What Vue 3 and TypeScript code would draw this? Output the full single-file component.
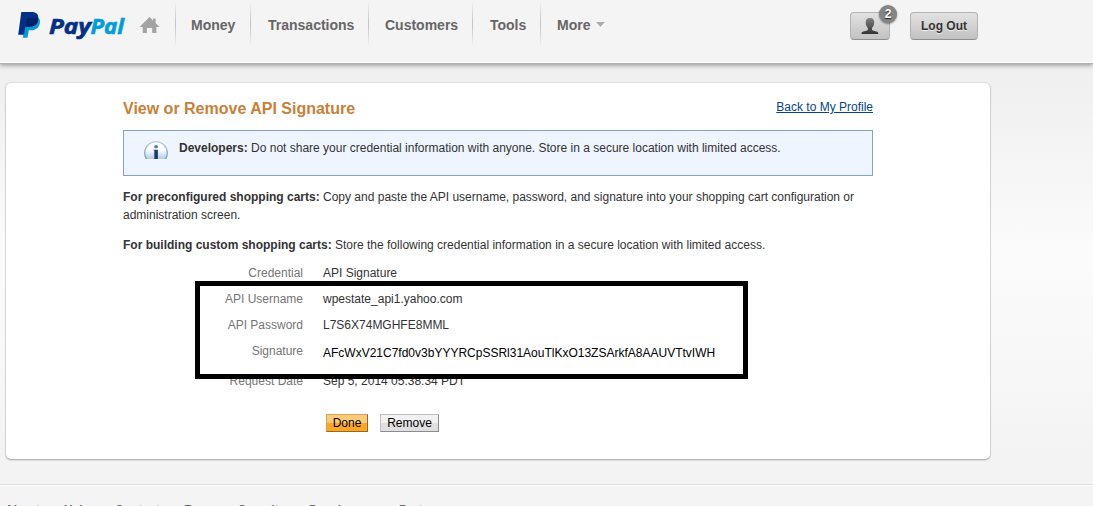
<script setup lang="ts">
interface NavItem { label: string; cls: string }
interface Row { label: string; value: string; cls: string }

const nav: NavItem[] = [
  { label: 'Money', cls: 'money' },
  { label: 'Transactions', cls: 'transactions' },
  { label: 'Customers', cls: 'customers' },
  { label: 'Tools', cls: 'tools' },
  { label: 'More', cls: 'more' },
]

const rows: Row[] = [
  { label: 'Credential', value: 'API Signature', cls: 'credential' },
  { label: 'API Username', value: 'wpestate_api1.yahoo.com', cls: 'username' },
  { label: 'API Password', value: 'L7S6X74MGHFE8MML', cls: 'password' },
  { label: 'Signature', value: 'AFcWxV21C7fd0v3bYYYRCpSSRl31AouTlKxO13ZSArkfA8AAUVTtvIWH', cls: 'signature' },
  { label: 'Request Date', value: 'Sep 5, 2014 05:38:34 PDT', cls: 'date' },
]

const footer: NavItem[] = [
  { label: 'About', cls: 'w59' },
  { label: 'Help', cls: 'w51' },
  { label: 'Contact', cls: 'w69' },
  { label: 'Fees', cls: 'w54' },
  { label: 'Security', cls: 'w71' },
  { label: 'Developers', cls: 'w90' },
  { label: 'Partners', cls: 'w60' },
]
</script>

<template>
  <div class="page">
    <header class="header">
      <div class="brand">
        <svg class="mark" width="24" height="28" viewBox="0 0 24 28">
          <path fill="#009cde" d="M7 7h13.4c1.5 1.3 1.9 3.1 1.4 5.3-1 4.900-4.200 7-8.700 7h-2.300l-1.300 7.500H5z" />
          <path fill="#003087" d="M3.300 1h10.200c4.700 0 7.400 2.300 6.700 7-.8 5.500-4.500 7.700-9.500 7.700H7.400L6 23.800H.2z" />
          <path fill="#012169" d="M9.200 7h10.900c.2.8.2 1.400.1 2.200-.9 4.800-4.400 6.700-9.300 6.700H7.600z" />
        </svg>
        <svg class="wordmark" width="78" height="28" viewBox="0 0 78 28">
          <text x="0" y="22.500" textLength="42" lengthAdjust="spacingAndGlyphs" fill="#003087" stroke="#003087">Pay</text>
          <text x="41.500" y="22.500" textLength="33.500" lengthAdjust="spacingAndGlyphs" fill="#009cde" stroke="#009cde">Pal</text>
        </svg>
      </div>
      <svg class="home" width="20" height="17" viewBox="0 0 20 17">
        <path fill="#a3a3a3" d="M9.500 0 13 3.400V1.600h2.600V6L19 9.600V10h-2.600v6h-4.200v-5H6.900v5H2.700v-6H0v-.4z" />
      </svg>
      <nav class="nav">
        <a v-for="n in nav" :key="n.label" class="nav-item" :class="n.cls">
          <span>{{ n.label }}</span>
          <svg v-if="n.cls === 'more'" class="caret" width="10" height="6" viewBox="0 0 10 6">
            <path d="M1 1h9L5.500 6z" fill="#fff" />
            <path d="M0 0h9L4.500 5z" fill="#aaa" />
          </svg>
        </a>
      </nav>
      <div class="actions">
        <div class="btn user">
          <svg width="18" height="17" viewBox="0 0 18 17">
            <defs>
              <linearGradient id="bust" x1="0" y1="0" x2="0" y2="1">
                <stop offset="0" stop-color="#808080" /><stop offset="1" stop-color="#333" />
              </linearGradient>
            </defs>
            <path fill="url(#bust)" d="M9 0c3 0 4.400 1.800 4.200 4.600 0 2.300-.7 4-2.200 5.400v2c1.200 1 6.300 1.200 6.300 3.200V16H.5v-.8c0-2 5.200-2.200 6.400-3.200v-2C5.400 8.600 4.700 6.900 4.700 4.600 4.600 1.800 6 0 9 0z" />
          </svg>
          <span class="badge">2</span>
        </div>
        <div class="btn logout">Log Out</div>
      </div>
    </header>

    <main class="card">
      <div class="content">
        <div class="titlebar">
          <h1>View or Remove API Signature</h1>
          <a class="back">Back to My Profile</a>
        </div>
        <div class="notice">
          <svg class="info" width="24" height="18" viewBox="0 0 24 18">
            <defs>
              <linearGradient id="ring" x1="0" y1="0" x2="0" y2="1">
                <stop offset="0" stop-color="#bdd0e4" /><stop offset="1" stop-color="#6390bd" />
              </linearGradient>
              <linearGradient id="ball" x1="0" y1="0" x2="0" y2="1">
                <stop offset="0" stop-color="#fff" /><stop offset=".35" stop-color="#fff" /><stop offset=".8" stop-color="#a9c8e3" />
              </linearGradient>
            </defs>
            <circle cx="12" cy="12" r="11.300" fill="url(#ball)" stroke="url(#ring)" stroke-width="1.400" />
            <rect x="10.300" y="4.300" width="3.600" height="3" rx="1" fill="#527ba6" />
            <path d="M9.500 8.800h4.400V18h-3.600V9.600h-.8z" fill="#1c3c70" />
          </svg>
          <p class="notice-text"><b>Developers:</b> Do not share your credential information with anyone. Store in a secure location with limited access.</p>
        </div>
        <p class="para"><b>For preconfigured shopping carts:</b> Copy and paste the API username, password, and signature into your shopping cart configuration or<br>administration screen.</p>
        <p class="para"><b>For building custom shopping carts:</b> Store the following credential information in a secure location with limited access.</p>
        <dl class="rows">
          <div v-for="r in rows" :key="r.label" class="row" :class="r.cls">
            <dt>{{ r.label }}</dt>
            <dd>{{ r.value }}</dd>
          </div>
          <div class="frame"></div>
        </dl>
        <div class="buttons">
          <button class="done">Done</button>
          <button class="remove">Remove</button>
        </div>
      </div>
    </main>

    <footer class="footer">
      <a v-for="f in footer" :key="f.label" :class="f.cls">{{ f.label }}</a>
    </footer>
  </div>
</template>

<style>
html, body { margin: 0; overflow: hidden; }
</style>

<style scoped>
.page {
  width: 1093px;
  height: 506px;
  overflow: hidden;
  box-sizing: border-box;
  font: 12px/18px "Liberation Sans", Arial, sans-serif;
  color: #333;
  background: linear-gradient(#f0f0f0 0, #f0f0f0 84px, #fbfbfb 250px, #f7f7f7 380px, #f3f3f3 450px);
}
.header {
  height: 62px;
  display: flex;
  background: #f4f4f4;
  border-bottom: 1px solid #fff;
  box-shadow: 0 1px 0 #b0b0b0, 0 2px 5px rgba(0, 0, 0, .42);
}
.brand { display: flex; width: 140px; }
.mark { margin: 11px 0 0 18px; }
.wordmark { margin: 11px 0 0 7px; font: italic 700 21px "Open Sans", sans-serif; overflow: visible; }
.wordmark text { stroke-width: .6px; }
.home { margin-top: 17px; width: 20px; flex: none; }
.nav { display: flex; margin-left: 15px; height: 46px; }
.nav-item {
  box-sizing: border-box;
  padding: 16px 0 0 16px;
  font-size: 14px;
  line-height: 18px;
  font-weight: 700;
  color: #666;
  white-space: nowrap;
  background: linear-gradient(rgba(190, 190, 190, 0) 2px, #c6c6c6 20px, #c6c6c6 28px, rgba(190, 190, 190, 0) 46px) left / 1px 100% no-repeat;
}
.money { width: 75px; }
.transactions { width: 118px; padding-left: 18px; }
.customers { width: 104px; padding-left: 17px; }
.tools { width: 68px; padding-left: 18px; }
.more { width: 80px; padding-left: 17px; }
.caret { margin-left: 6px; vertical-align: 2px; }
.actions { display: flex; margin: 12px 0 0 auto; padding-right: 115px; gap: 20px; }
.btn {
  box-sizing: border-box;
  height: 28px;
  border: 1px solid #b3b3b3;
  border-bottom-color: #8e8e8e;
  border-radius: 4px;
  background: linear-gradient(#e2e2e2, #c2c2c2);
}
.user { width: 40px; position: relative; display: flex; justify-content: center; padding-top: 5px; }
.badge {
  position: absolute;
  top: -8px;
  left: 28px;
  width: 18px;
  height: 18px;
  border-radius: 50%;
  background: #848484;
  color: #fff;
  font: 700 12px/18px "Liberation Sans", Arial, sans-serif;
  text-align: center;
  text-shadow: 0 1px 1px #222;
  box-shadow: 0 1px 2px rgba(0, 0, 0, .45);
}
.logout { width: 68px; text-align: center; font-weight: 700; line-height: 26px; color: #333; text-shadow: 0 1px 0 #eee; }
.card {
  box-sizing: border-box;
  width: 984px;
  height: 376px;
  margin: 20px 0 0 6px;
  padding: 0 117px;
  background: #fff;
  border-radius: 5px;
  box-shadow: 0 0 1px 1px rgba(0, 0, 0, .07), 0 1px 2px rgba(0, 0, 0, .28);
}
.content { width: 750px; }
.titlebar { display: flex; justify-content: space-between; height: 47px; }
h1 { margin: 17px 0 0; font-size: 16px; line-height: 18px; color: #c88039; white-space: nowrap; }
.back { margin-top: 15px; height: 18px; color: #084482; text-decoration: underline; }
.notice { box-sizing: border-box; height: 46px; border: 1px solid #84a3c7; background: #eef5fe; display: flex; }
.info { margin: 10px 0 0 20px; }
.notice-text { margin: 8px 0 0 11px; white-space: nowrap; }
.para { margin: 0; padding-top: 12px; white-space: nowrap; }
.rows { position: relative; margin: 10px 0 0; }
.row { display: flex; height: 26px; }
.row.signature { height: 30px; }
.row.date { height: 18px; }
dt { width: 180px; text-align: right; color: #757575; }
dd { margin: 0 0 0 20px; white-space: nowrap; }
.signature dd { padding-top: 2px; color: #000; }
.frame {
  position: absolute;
  left: 72px;
  top: 17px;
  width: 543px;
  height: 88px;
  border: 5px solid #000;
}
.buttons { display: flex; gap: 12px; margin: 24px 0 0 203px; }
button {
  box-sizing: border-box;
  height: 18px;
  padding: 0;
  font: 12px/15px "Liberation Sans", Arial, sans-serif;
  color: #000;
  border: 1px solid;
}
.done { width: 42px; border-color: #cfa45f #92672b #92672b #cfa45f; background: linear-gradient(#fecb78 50%, #ffa722 50%); }
.remove { width: 59px; border-color: #bfbfbf #8c8c8c #8c8c8c #bfbfbf; background: linear-gradient(#f1f1f1 50%, #dfdfdf 50%); }
.footer {
  display: flex;
  height: 40px;
  margin-top: 25px;
  padding: 16px 0 0 5px;
  border-top: 1px solid #dedede;
  box-shadow: inset 0 1px 0 #fff;
  background: #f4f4f4;
  font-weight: 700;
  color: #666;
}
.w59 { width: 59px; } .w51 { width: 51px; } .w69 { width: 69px; } .w54 { width: 54px; }
.w71 { width: 71px; } .w90 { width: 90px; } .w60 { width: 60px; }
</style>
